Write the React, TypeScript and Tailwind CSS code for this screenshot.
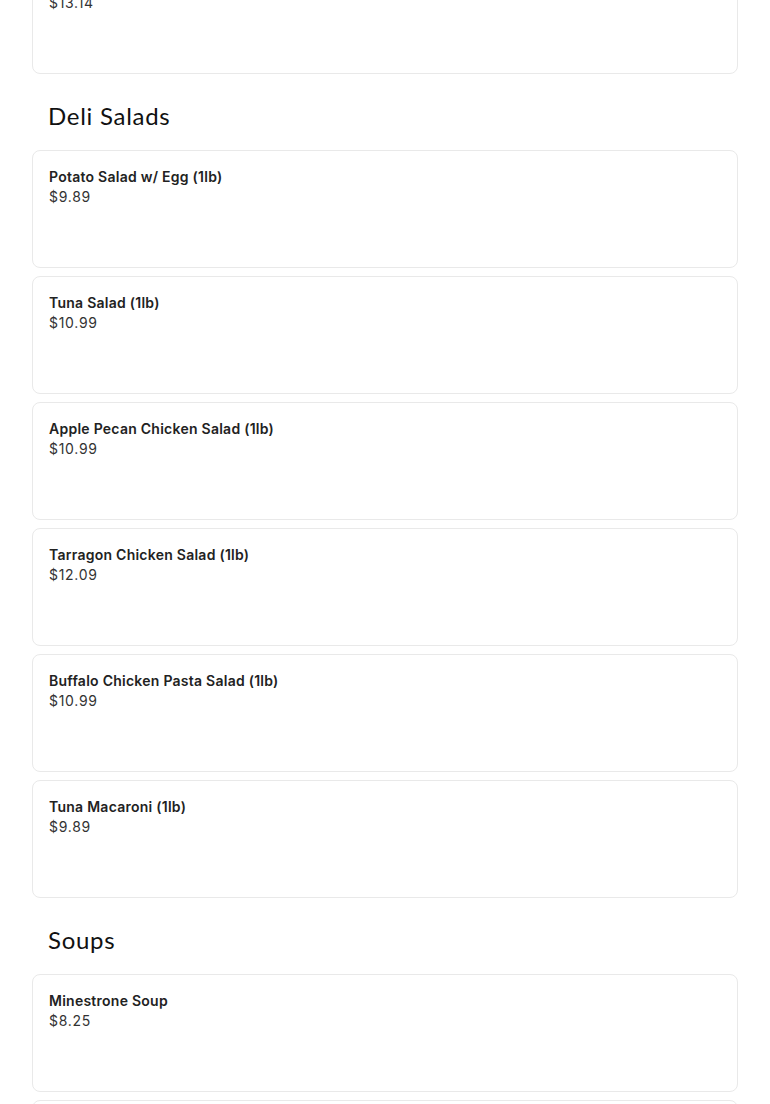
const sections = [
  {
    title: null,
    items: [{ name: "", price: "$13.14" }],
  },
  {
    title: "Deli Salads",
    items: [
      { name: "Potato Salad w/ Egg (1lb)", price: "$9.89" },
      { name: "Tuna Salad (1lb)", price: "$10.99" },
      { name: "Apple Pecan Chicken Salad (1lb)", price: "$10.99" },
      { name: "Tarragon Chicken Salad (1lb)", price: "$12.09" },
      { name: "Buffalo Chicken Pasta Salad (1lb)", price: "$10.99" },
      { name: "Tuna Macaroni (1lb)", price: "$9.89" },
    ],
  },
  {
    title: "Soups",
    items: [
      { name: "Minestrone Soup", price: "$8.25" },
      { name: "", price: "" },
    ],
  },
];

function ItemCard({ name, price }: { name: string; price: string }) {
  return (
    <div className="h-[118px] rounded-lg border border-[#e9e9e9] bg-white px-4 pt-4">
      <div className="h-5 text-[14px] font-semibold leading-5 tracking-[0.018em] text-[#222]">{name}</div>
      <div className="text-[14px] leading-5 tracking-[0.05em] text-[#333]">{price}</div>
    </div>
  );
}

export default function App() {
  return (
    <div className="h-[1104px] overflow-hidden bg-white font-['Inter',sans-serif]">
      <div className="mx-8 -mt-[44px] flex flex-col">
        {sections.map((section, i) => (
          <div key={i} className="flex flex-col">
            {section.title && (
              <h2 className="mt-[26px] mb-[18px] px-4 font-['Lato',sans-serif] text-[24px] font-normal leading-8 tracking-[0.03em] text-[#111]">
                {section.title}
              </h2>
            )}
            <div className="flex flex-col gap-2">
              {section.items.map((item, j) => (
                <ItemCard key={j} name={item.name} price={item.price} />
              ))}
            </div>
          </div>
        ))}
      </div>
    </div>
  );
}
